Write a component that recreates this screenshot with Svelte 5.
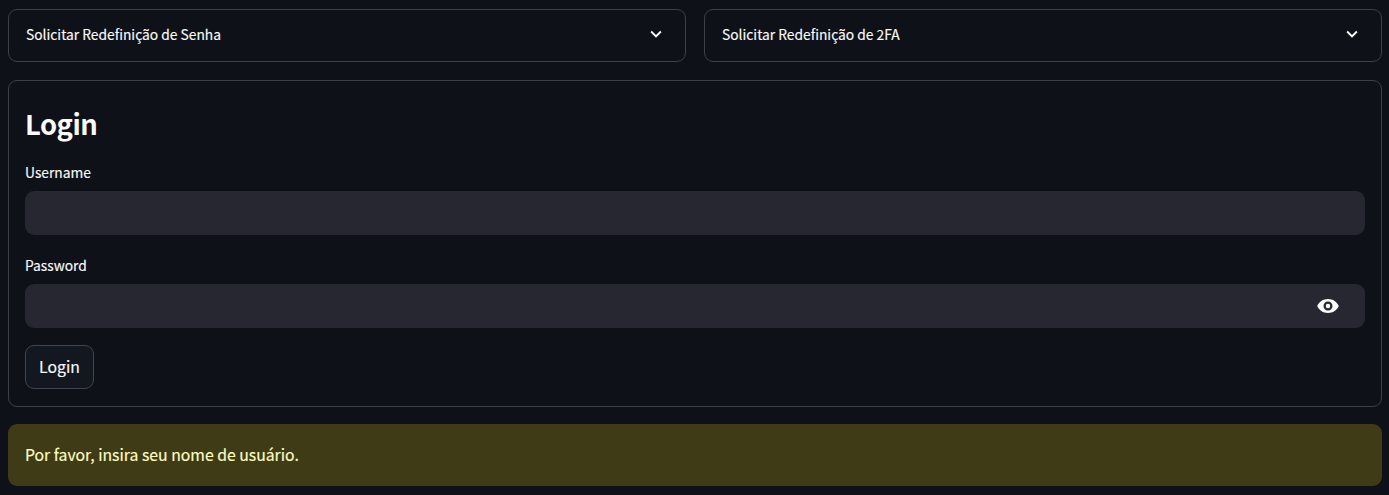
<script>
  const panels = ['Solicitar Redefinição de Senha', 'Solicitar Redefinição de 2FA'];
  let username = $state('');
  let password = $state('');
  let visible = $state(false);
</script>

<main>
  <div class="panels">
    {#each panels as title}
      <button class="panel" type="button">
        <span>{title}</span>
        <svg class="chevron" viewBox="0 0 24 24" aria-hidden="true">
          <path d="M7.41 8.59 12 13.17l4.59-4.58L18 10l-6 6-6-6z" />
        </svg>
      </button>
    {/each}
  </div>

  <form onsubmit={(e) => e.preventDefault()}>
    <h2>Login</h2>
    <label for="username">Username</label>
    <div class="field">
      <input id="username" type="text" bind:value={username} />
    </div>
    <label for="password">Password</label>
    <div class="field">
      <input id="password" type={visible ? 'text' : 'password'} bind:value={password} />
      <button class="reveal" type="button" aria-label="Password" onclick={() => (visible = !visible)}>
        <svg class="eye" viewBox="0 0 22 14" aria-hidden="true">
          <path
            fill-rule="evenodd"
            d="M.2 7C2 2.8 6 0 11 0s9 2.8 10.8 7C20 11.2 16 14 11 14S2 11.2.2 7zM11 2.5a4.5 4.5 0 1 0 0 9 4.5 4.5 0 0 0 0-9zM11 4.7a2.3 2.3 0 1 1 0 4.6 2.3 2.3 0 0 1 0-4.6z"
          />
        </svg>
      </button>
    </div>
    <button class="submit" type="submit">Login</button>
  </form>

  <div class="alert" role="alert">Por favor, insira seu nome de usuário.</div>
</main>

<style>
  :global(body) {
    background: #0e1117;
  }
  main {
    box-sizing: border-box;
    height: 495px;
    padding: 9px 7px 0 8px;
    color: #fafafa;
    font-family: 'Noto Sans CJK SC', sans-serif;
    -webkit-text-stroke: 0.15px;
    overflow: hidden;
  }
  button,
  input {
    font: inherit;
    color: inherit;
    margin: 0;
  }
  svg {
    fill: currentColor;
    display: block;
  }
  .panels {
    display: grid;
    grid-template-columns: 1fr 1fr;
    gap: 18px;
    margin-bottom: 18px;
  }
  .panel {
    box-sizing: border-box;
    height: 53px;
    display: flex;
    align-items: center;
    justify-content: space-between;
    padding: 0 18px 3px 17px;
    border: 1px solid #3d4045;
    border-radius: 9px;
    background: none;
    font-size: 13.8px;
    line-height: 24px;
  }
  .chevron {
    width: 22px;
    height: 22px;
  }
  form {
    box-sizing: border-box;
    height: 327px;
    padding: 20px 16px 0;
    border: 1px solid #3d4045;
    border-radius: 9px;
    margin-bottom: 17px;
  }
  h2 {
    margin: 0 0 16px;
    font-size: 27.4px;
    letter-spacing: -0.5px;
    line-height: 44px;
    font-weight: 700;
    -webkit-text-stroke: 0;
  }
  label {
    display: block;
    height: 30px;
    font-size: 13.8px;
    line-height: 22px;
  }
  .field {
    height: 44px;
    display: flex;
    border-radius: 9px;
    background: #262730;
    margin-bottom: 19px;
  }
  input {
    flex: 1;
    border: 0;
    outline: 0;
    background: none;
    padding: 0 13px;
    font-size: 15.8px;
  }
  .reveal {
    border: 0;
    background: none;
    padding: 0 26px 0 0;
    display: flex;
    align-items: center;
  }
  .eye {
    width: 22px;
    height: 14px;
  }
  .submit {
    box-sizing: border-box;
    display: block;
    width: 69px;
    height: 44px;
    margin-top: -2px;
    padding: 0;
    border: 1px solid #41444c;
    border-radius: 9px;
    background: #131720;
    font-size: 15.8px;
    line-height: 28px;
  }
  .alert {
    box-sizing: border-box;
    height: 62px;
    padding: 17px;
    border-radius: 9px;
    background: #3e3b16;
    color: #ffffc2;
    font-size: 15.78px;
    line-height: 28px;
  }
</style>
